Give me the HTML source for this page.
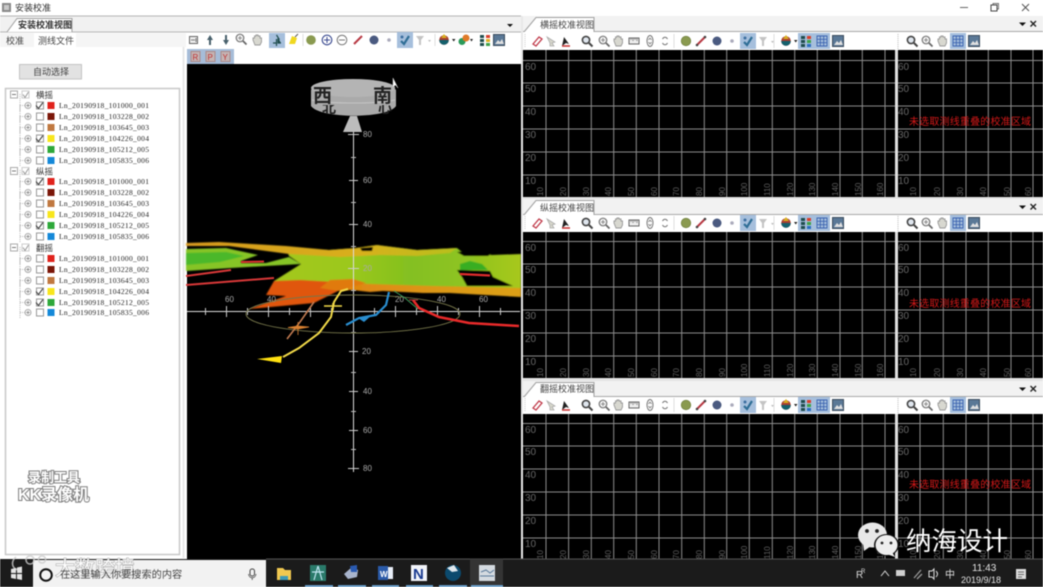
<!DOCTYPE html>
<html><head><meta charset="utf-8"><style>
html,body{margin:0;padding:0;background:#fff;width:1043px;height:587px;overflow:hidden}
svg{display:block;filter:blur(.45px)}
text{font-family:"Liberation Sans","Noto Sans CJK SC",sans-serif}
.t{font-size:8.5px;fill:#333}
.f{font-family:"Liberation Serif",serif;font-size:7.5px;fill:#222}
.g{font-size:9px;fill:#444}
.l{font-size:10px;fill:#666}
.v{font-size:8px;fill:#5e5e5e}
.a{font-size:8px;fill:#aaa}
.r{font-size:10px;fill:#d41818}
</style></head><body>
<svg width="1043" height="587" viewBox="0 0 1043 587" xmlns="http://www.w3.org/2000/svg">
<defs>
<linearGradient id="terr" x1="0" y1="0" x2="1" y2="0"><stop offset="0" stop-color="#a4c81c"/><stop offset=".3" stop-color="#9cc81e"/><stop offset=".55" stop-color="#84c020"/><stop offset=".8" stop-color="#90c420"/><stop offset="1" stop-color="#a8c81c"/></linearGradient>
<linearGradient id="gold" x1="0" y1="0" x2="1" y2="0"><stop offset="0" stop-color="#e08410"/><stop offset=".6" stop-color="#dc9a18"/><stop offset="1" stop-color="#dca018"/></linearGradient>
<linearGradient id="band" x1="0" y1="0" x2="1" y2="0"><stop offset="0" stop-color="#d89a20"/><stop offset=".65" stop-color="#d8b01c"/><stop offset="1" stop-color="#b8c01c"/></linearGradient>
<filter id="sf" x="-5%" y="-5%" width="110%" height="110%"><feGaussianBlur stdDeviation=".6"/></filter>
<g id="grid">
<rect width="372" height="147" fill="#000"/>
<path d="M23 0V147M45.6 0V147M68.3 0V147M90.7 0V147M113.3 0V147M136 0V147M158.7 0V147M181.3 0V147M203.7 0V147M226.3 0V147M249.3 0V147M271.7 0V147M294.3 0V147M317 0V147M339.3 0V147M362 0V147M0 10.5H372M0 33H372M0 56H372M0 79H372M0 102H372M0 125H372" stroke="#8c8c8c" stroke-width="1" fill="none"/>
<text class="l" x="2" y="20">60</text><text class="l" x="2" y="42">50</text><text class="l" x="2" y="65">40</text><text class="l" x="2" y="88">30</text><text class="l" x="2" y="111">20</text><text class="l" x="2" y="134">10</text>
<g class="v"><text transform="translate(20 146) rotate(-90)">10</text><text transform="translate(43 146) rotate(-90)">20</text><text transform="translate(66 146) rotate(-90)">30</text><text transform="translate(88 146) rotate(-90)">40</text><text transform="translate(111 146) rotate(-90)">50</text><text transform="translate(134 146) rotate(-90)">60</text><text transform="translate(156 146) rotate(-90)">70</text><text transform="translate(179 146) rotate(-90)">80</text><text transform="translate(202 146) rotate(-90)">90</text><text transform="translate(224 146) rotate(-90)">100</text><text transform="translate(247 146) rotate(-90)">110</text><text transform="translate(270 146) rotate(-90)">120</text><text transform="translate(292 146) rotate(-90)">130</text><text transform="translate(315 146) rotate(-90)">140</text><text transform="translate(338 146) rotate(-90)">150</text><text transform="translate(360 146) rotate(-90)">160</text></g>
</g>
<g id="gridr">
<rect width="145" height="147" fill="#000"/>
<path d="M22 0V147M45.3 0V147M68 0V147M90.3 0V147M113 0V147M135 0V147M0 10.5H145M0 33H145M0 56H145M0 79H145M0 102H145M0 125H145" stroke="#8c8c8c" stroke-width="1" fill="none"/>
<text class="l" x="0" y="20">60</text><text class="l" x="0" y="42">50</text><text class="l" x="0" y="65">40</text><text class="l" x="0" y="88">30</text><text class="l" x="0" y="111">20</text><text class="l" x="0" y="134">10</text>
<g class="v"><text transform="translate(18 146) rotate(-90)">10</text><text transform="translate(42 146) rotate(-90)">20</text><text transform="translate(65 146) rotate(-90)">30</text><text transform="translate(88 146) rotate(-90)">40</text><text transform="translate(112 146) rotate(-90)">50</text><text transform="translate(133 146) rotate(-90)">60</text></g>
</g>
<g id="mag"><circle cx="-1" cy="-1" r="3.6" fill="#dfe6ee" stroke="#444" stroke-width="1.6"/><path d="M2 2L5.5 5.5" stroke="#444" stroke-width="2"/></g>
<g id="mag2"><circle cx="-1" cy="-1" r="3.8" fill="#f4f4f4" stroke="#777" stroke-width="1.2"/><path d="M2 2L5.5 5.5" stroke="#666" stroke-width="1.8"/><path d="M-3 -1H1M-1 -3V1" stroke="#777" stroke-width=".8"/></g>
<g id="hand"><path d="M-4 0V-2L-2.500 -2V-4H-1V-5H1V-4H3V-2H4.500V2L3 5H-2Z" fill="#d8d8d0" stroke="#999" stroke-width=".9"/></g>
<g id="check"><rect x="-8" y="-8" width="16" height="16" fill="#a6bfdc"/><path d="M-4 1L-1 4L4 -4" fill="none" stroke="#2f6e96" stroke-width="2.200"/><circle cx="-3" cy="-3" r="1.500" fill="#3d6fa0"/></g>
<g id="filter"><path d="M-4 -4H4L1 0V5H-1V0Z" fill="#c4c4c4"/><path d="M8 0H11L9.500 2Z" fill="#bbb"/></g>
<g id="drop"><circle r="4.800" fill="#a83c30"/><path d="M-4.800 0A4.800 4.800 0 0 0 4.800 0Z" fill="#14606c"/><path d="M0 -6L-3 -2H3Z" fill="#d8b020"/><path d="M8 -1H11.500L9.700 1.500Z" fill="#222"/></g>
<g id="stackhl"><rect x="-8" y="-8" width="16" height="16" fill="#a6bfdc"/><path d="M-5 -5H-1V-2H-5ZM-5 -1H-1V2H-5ZM-5 3H-1V6H-5Z" fill="#1f4d4d"/><path d="M1 -5H5V-2H1Z" fill="#d8402c"/><path d="M1 -1H5V2H1Z" fill="#3fa34a"/><path d="M1 3H5V6H1Z" fill="#2a6fc0"/></g>
<g id="gridhl"><rect x="-8" y="-8" width="16" height="16" fill="#a6bfdc"/><path d="M-5 -5H5V5H-5ZM-5 -1.700H5M-5 1.700H5M-1.700 -5V5M1.700 -5V5" fill="none" stroke="#3a62b0" stroke-width=".9"/></g>
<g id="img"><rect x="-5.500" y="-5.500" width="11" height="11" fill="#5a7896" stroke="#3c4c5c"/><path d="M-4 4L-1 0L1 2L3 -1L5 4Z" fill="#e0e0e0"/></g>
<g id="tbl">
<path d="M2 0V14" stroke="#ccc" stroke-dasharray="1 1"/>
<g transform="translate(14 7)"><path d="M-4 3L2 -4L5 -2L-1 5Z" fill="#fff" stroke="#c03a4a" stroke-width="1.300"/></g>
<g transform="translate(28 7)"><path d="M-4 -4L4 1L1 2L3 5H-1L-1 2Z" fill="#d8d8cc" stroke="#aaa" stroke-width=".8"/></g>
<g transform="translate(43 7)"><path d="M-2 -4L3 3L0 2L-4 5Z" fill="#222"/><path d="M-4 5L4 5" stroke="#c83030" stroke-width="1.500"/></g>
<use href="#mag" x="64" y="7"/><use href="#mag2" x="81" y="7"/><use href="#hand" x="95" y="7"/>
<g transform="translate(111 7)"><rect x="-5" y="-3" width="10" height="6" fill="#eee" stroke="#666"/><path d="M-3 -3V-1M-1 -3V0M1 -3V-1M3 -3V0" stroke="#666" stroke-width=".7"/></g>
<g transform="translate(127 7)" fill="none" stroke="#777"><ellipse rx="3" ry="5.500"/><path d="M-1.500 -1L0 -3L1.500 -1M-1.500 1L0 3L1.500 1" stroke-width=".8"/></g>
<g transform="translate(142 7)" fill="none" stroke="#777"><path d="M-2.500 -2A3 4 0 0 1 2.500 -2M-2.500 2A3 4 0 0 0 2.500 2"/></g>
<path d="M151 0V14" stroke="#ddd"/>
<circle cx="163" cy="7" r="4.800" fill="#8a9a50" stroke="#6a7a3a" stroke-width=".6"/>
<path d="M174 11L182 3" stroke="#b83a44" stroke-width="2"/><circle cx="182" cy="3" r="1.300" fill="#444"/><circle cx="174" cy="11" r="1.300" fill="#444"/>
<circle cx="194" cy="7" r="4.500" fill="#4a5a80"/><circle cx="209" cy="7" r="1.800" fill="#aab"/>
<use href="#check" x="225" y="7"/><use href="#filter" x="240" y="7"/>
<path d="M251 0V14" stroke="#ddd"/>
<use href="#drop" x="263" y="7"/><use href="#stackhl" x="283" y="7"/><use href="#gridhl" x="299" y="7"/><use href="#img" x="315" y="7"/>
<path d="M375 0V16" stroke="#bbb" stroke-dasharray="1 1"/>
<use href="#mag" x="389" y="7"/><use href="#mag2" x="404" y="7"/><use href="#hand" x="419" y="7"/><use href="#gridhl" x="435" y="7"/><use href="#img" x="451" y="7"/>
</g>
<g id="wintab"><rect x="0" y="0" width="520" height="16" fill="#f2f2f2"/><path d="M0 15.500H520" stroke="#a8a8a8"/><path d="M1 16L13 1.500H71V16" fill="#fff" stroke="#a0a0a0"/><path d="M496 6.500H503L499.500 10Z" fill="#111"/><path d="M507.500 5L513 10.500M513 5L507.500 10.500" stroke="#222" stroke-width="1.400"/></g>
<g id="row"><path d="M-3 5.500H-8M-8 -6V11" stroke="#bbb" stroke-dasharray="1 1" fill="none"/><circle cx="0" cy="5.500" r="3" fill="#fff" stroke="#aaa"/><path d="M-1.800 5.500H1.800M0 3.700V7.300" stroke="#777" stroke-width=".7"/><rect x="8.500" y="2" width="7" height="7" fill="#fff" stroke="#999"/></g>
<path id="ck" d="M0 3L2.500 6L7 0" fill="none" stroke="#444" stroke-width="1.100"/>
<g id="hdr"><rect x="-3.500" y="-3.500" width="7" height="7" fill="#fff" stroke="#aaa"/><path d="M-2 0H2" stroke="#777"/><rect x="8" y="-3.500" width="7" height="7" fill="#fff" stroke="#ccc"/><path d="M9 0L11 3L14.500 -2.500" fill="none" stroke="#999"/></g>
<clipPath id="dc2"><path d="M311 105H396V114H311Z"/></clipPath>
</defs>

<rect width="1043" height="587" fill="#fff"/>
<!-- title -->
<rect x="2" y="3" width="9" height="9" fill="#8a8a8a"/><rect x="4" y="5" width="5" height="5" fill="#c8c8c8"/>
<text x="15" y="11" font-size="9" fill="#333">安装校准</text>
<path d="M960 7.500H968" stroke="#666"/><rect x="991" y="5" width="6" height="6" fill="none" stroke="#444"/><path d="M993 5V3.500H998.500V9H997" fill="none" stroke="#444" stroke-width=".7"/><path d="M1022 4L1029 11M1029 4L1022 11" stroke="#555"/>
<!-- left window tabs -->
<rect x="0" y="16" width="521" height="16" fill="#f1f1f1"/><path d="M0 16H521M0 32H521" stroke="#b5b5b5"/>
<path d="M7 32L17 18.500H72V32" fill="#fff" stroke="#a0a0a0"/>
<text x="18" y="28" font-size="9" font-weight="bold" fill="#333">安装校准视图</text>
<path d="M507 24H513L510 27Z" fill="#111"/>
<!-- left panel -->
<rect x="0" y="33" width="186" height="526" fill="#f5f5f5"/>
<rect x="0" y="47" width="186" height="512" fill="#fff"/>
<rect x="34" y="33" width="42" height="14" fill="#fff"/>
<text x="6" y="44" font-size="9" fill="#444">校准</text><text x="38" y="44" font-size="9" fill="#444">测线文件</text>
<rect x="19.500" y="64.500" width="62" height="14.500" fill="#e2e2e2" stroke="#c4c4c4"/>
<text x="33" y="75" font-size="9" fill="#444">自动选择</text>
<rect x="5.500" y="88.500" width="174" height="466" fill="#fff" stroke="#c8c8c8" stroke-width="1.500"/>
<path d="M183.500 47V558" stroke="#e8e8e8" stroke-width="2"/>
<!-- tree -->
<use href="#hdr" x="14" y="94.500"/><text class="t" x="36" y="98">横摇</text>
<use href="#hdr" x="14" y="171"/><text class="t" x="36" y="174.500">纵摇</text>
<use href="#hdr" x="14" y="247.500"/><text class="t" x="36" y="251">翻摇</text>
<g>
<use href="#row" x="28" y="100"/><rect x="47.500" y="102" width="7" height="7" fill="#e0231c"/><text class="f" x="59" y="108" textLength="90">Ln_20190918_101000_001</text><use href="#ck" x="36" y="102.500"/>
<use href="#row" x="28" y="111"/><rect x="47.500" y="113" width="7" height="7" fill="#7a1608"/><text class="f" x="59" y="119" textLength="90">Ln_20190918_103228_002</text>
<use href="#row" x="28" y="122"/><rect x="47.500" y="124" width="7" height="7" fill="#c07840"/><text class="f" x="59" y="130" textLength="90">Ln_20190918_103645_003</text>
<use href="#row" x="28" y="133"/><rect x="47.500" y="135" width="7" height="7" fill="#f8e61c"/><text class="f" x="59" y="141" textLength="90">Ln_20190918_104226_004</text><use href="#ck" x="36" y="135.500"/>
<use href="#row" x="28" y="144"/><rect x="47.500" y="146" width="7" height="7" fill="#2ea83a"/><text class="f" x="59" y="152" textLength="90">Ln_20190918_105212_005</text>
<use href="#row" x="28" y="155"/><rect x="47.500" y="157" width="7" height="7" fill="#1488d8"/><text class="f" x="59" y="163" textLength="90">Ln_20190918_105835_006</text>

<use href="#row" x="28" y="176"/><rect x="47.500" y="178" width="7" height="7" fill="#e0231c"/><text class="f" x="59" y="184" textLength="90">Ln_20190918_101000_001</text><use href="#ck" x="36" y="178.500"/>
<use href="#row" x="28" y="187"/><rect x="47.500" y="189" width="7" height="7" fill="#7a1608"/><text class="f" x="59" y="195" textLength="90">Ln_20190918_103228_002</text>
<use href="#row" x="28" y="198"/><rect x="47.500" y="200" width="7" height="7" fill="#c07840"/><text class="f" x="59" y="206" textLength="90">Ln_20190918_103645_003</text>
<use href="#row" x="28" y="209"/><rect x="47.500" y="211" width="7" height="7" fill="#f8e61c"/><text class="f" x="59" y="217" textLength="90">Ln_20190918_104226_004</text>
<use href="#row" x="28" y="220"/><rect x="47.500" y="222" width="7" height="7" fill="#2ea83a"/><text class="f" x="59" y="228" textLength="90">Ln_20190918_105212_005</text><use href="#ck" x="36" y="222.500"/>
<use href="#row" x="28" y="231"/><rect x="47.500" y="233" width="7" height="7" fill="#1488d8"/><text class="f" x="59" y="239" textLength="90">Ln_20190918_105835_006</text>

<use href="#row" x="28" y="253"/><rect x="47.500" y="255" width="7" height="7" fill="#e0231c"/><text class="f" x="59" y="261" textLength="90">Ln_20190918_101000_001</text>
<use href="#row" x="28" y="264"/><rect x="47.500" y="266" width="7" height="7" fill="#7a1608"/><text class="f" x="59" y="272" textLength="90">Ln_20190918_103228_002</text>
<use href="#row" x="28" y="275"/><rect x="47.500" y="277" width="7" height="7" fill="#c07840"/><text class="f" x="59" y="283" textLength="90">Ln_20190918_103645_003</text>
<use href="#row" x="28" y="286"/><rect x="47.500" y="288" width="7" height="7" fill="#f8e61c"/><text class="f" x="59" y="294" textLength="90">Ln_20190918_104226_004</text><use href="#ck" x="36" y="288.500"/>
<use href="#row" x="28" y="297"/><rect x="47.500" y="299" width="7" height="7" fill="#2ea83a"/><text class="f" x="59" y="305" textLength="90">Ln_20190918_105212_005</text><use href="#ck" x="36" y="299.500"/>
<use href="#row" x="28" y="307"/><rect x="47.500" y="309" width="7" height="7" fill="#1488d8"/><text class="f" x="59" y="315" textLength="90">Ln_20190918_105835_006</text>
</g>

<!-- center toolbar -->
<rect x="186" y="33" width="335" height="31" fill="#fff"/>
<g>
<rect x="189.500" y="36.500" width="8" height="7" fill="#eee" stroke="#666"/><path d="M191 40H195M196 38V42" stroke="#555" stroke-width=".8"/>
<path d="M210 35L213 40H211V45H209V40H207Z" fill="#48606c"/><path d="M226 45L223 40H225V35H227V40H229Z" fill="#48606c"/>
<use href="#mag2" x="241" y="39"/><use href="#hand" x="257" y="40"/>
<rect x="269" y="33" width="16" height="15" fill="#a6bfdc"/><path d="M276.500 35L279 39H278V43H281M273 43H276M276.500 39V46" stroke="#1f4d4d" stroke-width="1.200" fill="#1f4d4d"/>
<path d="M289 44L292 36L297 38L295 44Z" fill="#f0d820"/><path d="M295 37L298 34" stroke="#555"/>
<path d="M303 34V46" stroke="#ddd"/>
<circle cx="311" cy="40" r="4.800" fill="#8a9a50"/>
<circle cx="327" cy="40" r="4.800" fill="#fff" stroke="#3a4a90" stroke-width="1.100"/><path d="M324 40H330M327 37V43" stroke="#3a4a90"/>
<circle cx="342" cy="40" r="4.800" fill="#fff" stroke="#777"/><path d="M339 40H345" stroke="#777"/>
<path d="M354 44L362 36" stroke="#b83a44" stroke-width="2"/>
<circle cx="374" cy="40" r="4.500" fill="#4a5a80"/><circle cx="389" cy="40" r="1.800" fill="#aab"/>
<use href="#check" x="405" y="40"/><use href="#filter" x="420" y="40"/>
<path d="M435 34V46" stroke="#ddd"/>
<use href="#drop" x="444" y="40"/>
<g transform="translate(464 40)"><circle cx="-2" cy="1.500" r="3.500" fill="#2a9a5a"/><circle cx="2" cy="-2" r="3.500" fill="#e07a28"/><path d="M6 -1H9L7.500 1.500Z" fill="#222"/></g>
<g transform="translate(485 40)"><path d="M-5 -5H-1V-2H-5ZM-5 -1H-1V2H-5ZM-5 3H-1V6H-5Z" fill="#1f4d4d"/><path d="M1 -5H5V-2H1Z" fill="#d8402c"/><path d="M1 -1H5V2H1Z" fill="#e0b020"/><path d="M1 3H5V6H1Z" fill="#3fa34a"/></g>
<use href="#img" x="499" y="40"/>
<rect x="187" y="49" width="47" height="15" fill="#a6bcd8"/>
<rect x="191" y="51.500" width="9" height="10" fill="#c4b4b4" stroke="#a88"/><text x="192.500" y="60" font-size="8" fill="#c03030">R</text>
<rect x="206" y="51.500" width="9" height="10" fill="#c4b4b4" stroke="#a88"/><text x="207.500" y="60" font-size="8" fill="#c03030">P</text>
<rect x="221" y="51.500" width="9" height="10" fill="#c4b4b4" stroke="#a88"/><text x="222.500" y="60" font-size="8" fill="#c03030">Y</text>
</g>

<!-- 3D view -->
<rect x="187" y="64" width="334" height="495" fill="#000"/>
<!-- terrain -->
<g filter="url(#sf)">
<path d="M286 248L329 250L356 248L377 245L417 250L457 248L462 252L492 255L521 254V292L350 286L274 281L301 264L289 256Z" fill="url(#terr)"/>
<path d="M186 243L219 242L286 246L329 250L356 248L377 245L417 250L457 248L450 253L417 256L380 255L340 257L289 254L229 246L186 246Z" fill="url(#band)"/>
<path d="M186 249L226 248L258 255L241 261L241 263L266 263L289 257L301 264L231 268L186 271Z" fill="#86c426"/>
<path d="M186 253L226 252L244 256L220 262L186 265Z" fill="#4cb82a"/>
<path d="M340 283L433 286L521 288V297L450 293L423 293L383 291L370 292L352 290L338 291Z" fill="url(#gold)"/>
<path d="M274 281L300 280L353 283L338 291L314 303L249 309L286 296L266 295Z" fill="#e0560e"/>
<path d="M330 280L353 279L366 283L352 287L338 291L320 288Z" fill="#e07a10"/>
<path d="M457 252L470 251L492 253L488 256L464 256Z" fill="#000"/>
<path d="M360 248L373 247L372 251L362 251Z" fill="#000"/>
<path d="M457 270L490 271L493 277L513 286L467 286L462 277Z" fill="#000"/>
<path d="M460 264L470 261L482 264L488 270L460 270Z" fill="#38ae22"/>
</g>
<path d="M241 262L264 261.500" stroke="#d83030" stroke-width="2"/>
<path d="M186 276L231 270M186 285L274 278" stroke="#d83838" stroke-width="2" fill="none"/>
<path d="M460 274L490 275.500" stroke="#e02c2c" stroke-width="2.200"/>

<!-- axes -->
<path d="M353.500 132V472M187 311.500H520" stroke="#ddd" stroke-width="1"/>
<path d="M348 134.500H359M349 180.500H358M349 224.500H358M348 268.500H359M349 351.500H358M349 391.500H358M349 430.500H358M348 468.500H359" stroke="#ccc"/>
<path d="M351 157.500H356M351 202.500H356M351 246.500H356M351 290.500H356M351 332.500H356M351 372.500H356M351 411.500H356M351 449.500H356" stroke="#bbb"/>
<path d="M205.500 308V315M226.500 306V317M247.500 308V315M268.500 306V317M289.500 308V315M310.500 306V317M331.500 308V315M374.500 308V315M395.500 306V317M416.500 308V315M437.500 306V317M458.500 308V315M479.500 306V317M500.500 308V315" stroke="#ccc"/>
<text class="a" x="225" y="302">60</text><text class="a" x="267" y="302">40</text><text class="a" x="395" y="302">20</text><text class="a" x="437" y="302">40</text><text class="a" x="479" y="302">60</text>
<text class="a" x="363" y="137">80</text><text class="a" x="363" y="183">60</text><text class="a" x="363" y="227">40</text><text class="a" x="363" y="271">20</text><text class="a" x="362" y="354">20</text><text class="a" x="363" y="394">40</text><text class="a" x="363" y="433">60</text><text class="a" x="363" y="471">80</text>
<ellipse cx="353" cy="314" rx="107" ry="19" fill="none" stroke="#76764a" stroke-width=".9"/>
<!-- tracks -->
<path d="M287 339L300 322L314 302" stroke="#c07a50" stroke-width="1.600" fill="none"/>
<path d="M288 327.500L298 326L309 327L298 329ZM298 322V335" fill="#d88030" stroke="#d88030" stroke-width=".8"/>
<path d="M283 357L299 348L319 333L331 317L334 302L341 291L348 289" stroke="#f0d848" stroke-width="2" fill="none"/>
<path d="M257 359L282 356L281 363Z" fill="#ffe010"/>
<path d="M324 306H342M333 303V310" stroke="#f0d848" stroke-width="1.600"/>
<path d="M346 325L359 318L376 315L386 305L389 292" stroke="#2a8ed0" stroke-width="2.200" fill="none"/>
<path d="M358 318L372 315L364 322Z" fill="#2a8ed0"/>
<path d="M394 291L405 298L418 309" stroke="#3a9a5a" stroke-width="1" fill="none"/>
<path d="M413 300L419 308L439 317L469 323L519 326" stroke="#e82a2a" stroke-width="2.600" fill="none"/>
<path d="M409 300H418" stroke="#b84040"/>

<!-- compass -->
<path d="M311 90C318 78 388 78 396 90V106C388 119 320 119 311 106Z" fill="#aaaaaa"/>
<ellipse cx="353" cy="88" rx="42" ry="9" fill="#b4b4b4"/>
<path d="M312 100C330 104 376 104 395 100" stroke="#c6c6c6" fill="none"/>
<text x="313" y="102" font-size="19" font-weight="bold" fill="#222">西</text>
<text x="373" y="102" font-size="19" font-weight="bold" fill="#222">南</text>
<g clip-path="url(#dc2)"><text x="322" y="113" font-size="14" font-weight="bold" fill="#222">北</text><text x="378" y="113" font-size="14" font-weight="bold" fill="#222">心</text></g>
<path d="M350 116H357L362 132H343Z" fill="#bcbcbc"/>
<path d="M393 78V87L395.500 85L398 88L393 78Z" fill="#fff" stroke="#ccc" stroke-width=".5"/>

<!-- right panels -->
<rect x="521" y="16" width="2" height="543" fill="#e8e8e8"/>
<use href="#grid" x="523" y="50"/><rect x="895" y="50" width="3" height="147" fill="#e0e0e0"/><use href="#gridr" x="898" y="50"/>
<use href="#wintab" x="523" y="16"/>
<rect x="523" y="32" width="520" height="18" fill="#fff"/>
<text class="g" x="540" y="28">横摇校准视图</text>
<g transform="translate(523 34)"><use href="#tbl"/></g>
<text class="r" x="909" y="125" textLength="122">未选取测线重叠的校准区域</text>

<use href="#grid" x="523" y="231"/><rect x="895" y="231" width="3" height="147" fill="#e0e0e0"/><use href="#gridr" x="898" y="231"/>
<rect x="523" y="197" width="520" height="2" fill="#e4e4e4"/>
<use href="#wintab" x="523" y="199"/>
<rect x="523" y="215" width="520" height="17" fill="#fff"/>
<text class="g" x="540" y="211">纵摇校准视图</text>
<g transform="translate(523 216)"><use href="#tbl"/></g>
<text class="r" x="909" y="307" textLength="122">未选取测线重叠的校准区域</text>

<use href="#grid" x="523" y="413"/><rect x="895" y="413" width="3" height="147" fill="#e0e0e0"/><use href="#gridr" x="898" y="413"/>
<rect x="523" y="378" width="520" height="3" fill="#e4e4e4"/>
<use href="#wintab" x="523" y="381"/>
<rect x="523" y="397" width="520" height="17" fill="#fff"/>
<text class="g" x="540" y="392">翻摇校准视图</text>
<g transform="translate(523 398)"><use href="#tbl"/></g>
<text class="r" x="909" y="488" textLength="122">未选取测线重叠的校准区域</text>

<!-- recorder watermark -->
<g font-weight="bold" fill="#fff" stroke="#7e7e7e" stroke-width="2" paint-order="stroke">
<text x="28" y="482" font-size="13">录制工具</text>
<text x="18" y="500" font-size="16">KK录像机</text>
</g>

<!-- taskbar -->
<rect x="0" y="559" width="1043" height="28" fill="#1b1b1b"/>
<path d="M266 559H1043" stroke="#555"/>
<rect x="33" y="560" width="233" height="27" fill="#f2f2f2"/>
<!-- overlaid watermark -->
<text x="55" y="575" font-size="20" fill="#fff" stroke="#9a9a9a" stroke-width="1" paint-order="stroke" opacity=".9">大数跨境</text>
<path d="M16 557C10 562 12 570 20 570M30 556A4 4 0 1 0 30.100 556M42 556A3.500 3.500 0 1 0 42.100 556" fill="none" stroke="#ccc" stroke-width="1.600" opacity=".8"/>
<circle cx="46" cy="575" r="5.800" fill="none" stroke="#111" stroke-width="2"/>
<text x="60" y="578" font-size="10.200" fill="#444">在这里输入你要搜索的内容</text>
<rect x="250" y="569" width="4.500" height="7" rx="2" fill="none" stroke="#444"/><path d="M248.500 574C249 579 255.500 579 256 574M252.200 578V580" fill="none" stroke="#444" stroke-width=".8"/>
<path d="M11 569L16 568V573H11ZM17 567.500L22 566.500V573H17ZM11 574H16V579L11 578ZM17 574H22V580L17 579Z" fill="#e4e4e4"/>
<rect x="470" y="559" width="33" height="28" fill="#343434"/>
<path d="M277 568H283L285 570H291V580H277Z" fill="#f0c850"/><path d="M280 576H288V580H280Z" fill="#3c9ab8"/>
<rect x="310" y="565" width="16" height="16" fill="#2a7a6a"/><path d="M318 566L314 580M318 566L322 580M312 572H324" stroke="#bfe4f0" stroke-width="1.200"/>
<path d="M344 574L352 567L358 570L357 577L348 579Z" fill="#a8b4cc"/><path d="M350 566L357 565L357 572L351 572Z" fill="#2a5ab0"/>
<rect x="378" y="566" width="10" height="14" fill="#2a5aa8"/><rect x="388" y="567" width="5" height="12" fill="#e8eef8"/><text x="380" y="577" font-size="8" font-weight="bold" fill="#fff">W</text>
<rect x="411" y="565" width="16" height="16" fill="#f2f4fa"/><text x="413" y="579" font-size="15" font-weight="bold" fill="#1a3a90">N</text>
<circle cx="453" cy="573" r="8" fill="#0c4a6e"/><path d="M447 568L454 565L458 571L452 572Z" fill="#e0e8ee"/>
<rect x="479" y="565" width="16" height="16" fill="#d4dae0"/><path d="M480 576H494M481 572L486 570L490 573L494 570" stroke="#5a7a9a" fill="none"/>
<path d="M305 586H333M338 586H366M372 586H399M406 586H433M439 586H467M471 586H503" stroke="#6ea8d8" stroke-width="1.800"/>

<!-- tray -->
<text x="856" y="578" font-size="10" fill="#d8d8d8">R</text><text x="861" y="573" font-size="6" fill="#d8d8d8">R</text>
<path d="M881 576L885 571L889 576" fill="none" stroke="#ddd"/>
<rect x="896" y="570" width="9" height="6" fill="#cfcfcf"/>
<path d="M914 578L921 570M917 579L922 574" stroke="#999" stroke-width="1.300"/>
<path d="M929 571H932L934 569V579L932 577H929Z" fill="none" stroke="#ddd"/><path d="M936 571C938 573 938 575 936 577" fill="none" stroke="#ddd"/>
<text x="945" y="578" font-size="10" fill="#e0e0e0">中</text>
<text x="972" y="571" font-size="10" fill="#e4e4e4">11:43</text>
<text x="961" y="583" font-size="9" fill="#e4e4e4">2019/9/18</text>
<rect x="1016" y="569" width="10" height="10" fill="#ddd"/><path d="M1018 572H1024M1018 574.500H1024M1018 577H1022" stroke="#444" stroke-width=".8"/>

<!-- wechat logo -->
<ellipse cx="872.500" cy="535" rx="14.500" ry="12.500" fill="#e8e8e8"/><path d="M863 543L864 551L871 546Z" fill="#e8e8e8"/>
<circle cx="867" cy="531" r="1.900" fill="#222"/><circle cx="877" cy="531" r="1.900" fill="#222"/>
<ellipse cx="886.500" cy="545" rx="12.500" ry="11" fill="#111"/>
<ellipse cx="886.500" cy="545" rx="11" ry="10" fill="#eee"/><path d="M892 552L895 557L887 554Z" fill="#eee"/>
<circle cx="882" cy="543" r="1.400" fill="#222"/><circle cx="891" cy="543" r="1.400" fill="#222"/>
<text x="906" y="550" font-size="25.500" fill="#fff">纳海设计</text>
</svg>
</body></html>
